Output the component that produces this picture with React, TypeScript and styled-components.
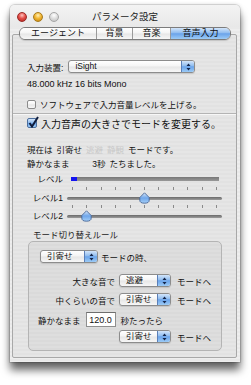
import React from 'react'
import styled, { createGlobalStyle } from 'styled-components'

const aqua = 'linear-gradient(#d3e5fa 0%, #8fbcef 45%, #6aa3ea 52%, #9ccbf6 100%)'
const glass = 'linear-gradient(#ffffff 0%, #f4f4f4 48%, #e6e6e6 52%, #f7f7f7 100%)'

const GlobalStyle = createGlobalStyle`
  html, body {
    margin: 0;
    padding: 0;
    background: #ffffff;
  }
  body {
    font-family: 'Liberation Sans', 'Noto Sans CJK JP', sans-serif;
    color: #111;
  }
`

const Desk = styled.div`
  width: 251px;
  height: 385px;
  box-sizing: border-box;
  padding: 5px 11px 0 10px;
  overflow: hidden;
`

const Window = styled.div`
  width: 230px;
  height: 357px;
  display: flex;
  flex-direction: column;
  border-radius: 5px 5px 0 0;
  background: repeating-linear-gradient(#eeeeee 0 2px, #e9e9e9 2px 4px);
  box-shadow: 0 0 0 1px rgba(0, 0, 0, 0.1), 0 8px 9px rgba(0, 0, 0, 0.6),
    0 0 4px rgba(0, 0, 0, 0.2);
`

const TitleBar = styled.div`
  height: 22px;
  display: grid;
  grid-template-columns: 1fr auto 1fr;
  align-items: center;
  border-radius: 5px 5px 0 0;
  background: linear-gradient(#f3f3f3, #e8e8e8);
`

const Lights = styled.div`
  display: flex;
  gap: 6px;
  padding-left: 7px;
  padding-top: 1px;
`

const Light = styled.span<{ $color: 'red' | 'yellow' | 'gray' }>`
  width: 10px;
  height: 10px;
  border-radius: 50%;
  box-sizing: border-box;
  border: 1px solid
    ${({ $color }) =>
      $color === 'red' ? '#9a2a26' : $color === 'yellow' ? '#a77a1c' : '#a6a6a6'};
  background: ${({ $color }) =>
    $color === 'red'
      ? 'radial-gradient(circle at 50% 30%, #ffc4c0 0, #e5504a 45%, #b0201c 100%)'
      : $color === 'yellow'
      ? 'radial-gradient(circle at 50% 30%, #fff0b8 0, #f2b733 45%, #c0800e 100%)'
      : 'radial-gradient(circle at 50% 30%, #ffffff 0, #dcdcdc 50%, #bdbdbd 100%)'};
`

const Title = styled.div`
  font-size: 9.5px;
  color: #222;
`

const Body = styled.div`
  flex: 1;
  display: flex;
  flex-direction: column;
  padding: 0 3px 4px 2px;
`

const TabBar = styled.div`
  align-self: center;
  position: relative;
  z-index: 1;
  display: flex;
  height: 13px;
  margin-left: 1px;
  margin-bottom: -6px;
  border: 1px solid #7c7c7c;
  border-radius: 6px;
  overflow: hidden;
  box-sizing: border-box;
  box-shadow: 0 1px 1px rgba(0, 0, 0, 0.15);
`

const Tab = styled.div<{ $active?: boolean; $w: number }>`
  width: ${({ $w }) => $w}px;
  display: flex;
  align-items: center;
  justify-content: center;
  font-size: 9px;
  line-height: 11px;
  color: #111;
  background: ${({ $active }) => ($active ? aqua : glass)};
  & + & {
    border-left: 1px solid #9a9a9a;
  }
`

const Panel = styled.div`
  flex: 1;
  border: 1px solid #a8a8a8;
  border-radius: 2px;
  background: repeating-linear-gradient(#e6e6e6 0 2px, #e2e2e2 2px 4px);
  display: flex;
  flex-direction: column;
`

const Section = styled.div`
  display: flex;
  flex-direction: column;
  padding: 0 14px;
`

const Row = styled.div<{ $top?: number; $h?: number; $gap?: number }>`
  display: flex;
  align-items: center;
  margin-top: ${({ $top }) => $top ?? 0}px;
  height: ${({ $h }) => $h ?? 13}px;
  gap: ${({ $gap }) => $gap ?? 0}px;
  font-size: 8.5px;
  white-space: nowrap;
`

const Text = styled.span<{ $dim?: boolean; $size?: number; $w?: number; $right?: boolean }>`
  font-size: ${({ $size }) => $size ?? 8.5}px;
  color: ${({ $dim }) => ($dim ? '#c9c9c9' : '#111')};
  ${({ $w }) => ($w ? `width: ${$w}px; flex: none;` : '')}
  text-align: ${({ $right }) => ($right ? 'right' : 'left')};
`

const PopupBox = styled.div<{ $w: number }>`
  width: ${({ $w }) => $w}px;
  height: 13px;
  flex: none;
  box-sizing: border-box;
  border: 1px solid #8c8c8c;
  border-radius: 3px;
  background: ${glass};
  display: flex;
  align-items: center;
  overflow: hidden;
  box-shadow: 0 1px 1px rgba(0, 0, 0, 0.12);
`

const PopupLabel = styled.span`
  flex: 1;
  padding-left: 6px;
  font-size: 8.5px;
  line-height: 11px;
`

const Stepper = styled.span`
  width: 12px;
  height: 100%;
  display: flex;
  align-items: center;
  justify-content: center;
  border-left: 1px solid #5a7fb8;
  background: ${aqua};
`

const Popup = ({ label, w }: { label: string; w: number }) => (
  <PopupBox $w={w}>
    <PopupLabel>{label}</PopupLabel>
    <Stepper>
      <svg width="5" height="8" viewBox="0 0 5 8">
        <path d="M2.5 0.5 L4.5 3 H0.5 Z M2.5 7.5 L4.5 5 H0.5 Z" fill="#13254a" />
      </svg>
    </Stepper>
  </PopupBox>
)

const Box = styled.span<{ $checked?: boolean; $size: number }>`
  width: ${({ $size }) => $size}px;
  height: ${({ $size }) => $size}px;
  flex: none;
  box-sizing: border-box;
  border: 1px solid ${({ $checked }) => ($checked ? '#4c6f9e' : '#8c8c8c')};
  border-radius: 2px;
  background: ${({ $checked }) => ($checked ? aqua : glass)};
  position: relative;
  & > svg {
    position: absolute;
    left: 0;
    top: -3px;
  }
`

const Check = ({ checked, size }: { checked?: boolean; size: number }) => (
  <Box $checked={checked} $size={size}>
    {checked && (
      <svg width="11" height="12" viewBox="0 0 11 12">
        <path d="M1.5 7 L4 10.5 L10 1" fill="none" stroke="#0e1c3c" strokeWidth="2" />
      </svg>
    )}
  </Box>
)

const Separator = styled.div`
  margin-top: 3px;
  border-top: 1px solid #b4b4b4;
  border-bottom: 1px solid #f7f7f7;
`

const Line = styled.div<{ $top: number }>`
  display: flex;
  align-items: center;
  margin-top: ${({ $top }) => $top}px;
  height: 12px;
  white-space: nowrap;
  gap: 4px;
`

const SliderRow = styled.div<{ $top: number }>`
  display: grid;
  grid-template-columns: 36px 1fr;
  column-gap: 4px;
  align-items: end;
  margin-top: ${({ $top }) => $top}px;
`

const SliderLabel = styled.span`
  font-size: 8.5px;
  line-height: 12px;
  text-align: right;
  white-space: nowrap;
`

const Meter = styled.div`
  height: 4px;
  margin: 0 3px 0 4px;
  background: linear-gradient(#777, #999);
  display: flex;
  align-self: center;
`

const MeterFill = styled.div`
  background: #1414f0;
`

const SliderBody = styled.div`
  display: flex;
  flex-direction: column;
`

const Ticks = styled.div`
  height: 3px;
  display: flex;
  justify-content: space-between;
  padding: 0 5px;
  margin-bottom: 2px;
`

const Tick = styled.span`
  width: 1px;
  background: #8a8a8a;
`

const TrackWrap = styled.div`
  position: relative;
  height: 12px;
  display: flex;
  align-items: center;
`

const Track = styled.div`
  flex: 1;
  height: 3px;
  border-radius: 2px;
  background: linear-gradient(#6a6a6a, #9c9c9c);
`

const Thumb = styled.svg`
  position: absolute;
  top: 0;
  margin-left: -5.5px;
`

const Slider = ({ label, pos, top }: { label: string; pos: number; top: number }) => (
  <SliderRow $top={top}>
    <SliderLabel>{label}</SliderLabel>
    <SliderBody>
      <Ticks>
        {Array.from({ length: 11 }).map((_, i) => (
          <Tick key={i} />
        ))}
      </Ticks>
      <TrackWrap>
        <Track />
        <Thumb
          width="11"
          height="12"
          viewBox="0 0 11 12"
          style={{ left: `calc(5.5px + (100% - 11px) * ${pos / 10})` }}
        >
          <defs>
            <linearGradient id={`th${label}`} x1="0" y1="0" x2="0" y2="1">
              <stop offset="0" stopColor="#d8e8fb" />
              <stop offset="0.5" stopColor="#6fa6ea" />
              <stop offset="1" stopColor="#a6d0f8" />
            </linearGradient>
          </defs>
          <path
            d="M5.5 0.8 L10.2 5.5 V8.2 Q10.2 11.2 5.5 11.2 Q0.8 11.2 0.8 8.2 V5.5 Z"
            fill={`url(#th${label})`}
            stroke="#4a6796"
            strokeWidth="0.9"
          />
        </Thumb>
      </TrackWrap>
    </SliderBody>
  </SliderRow>
)

const GroupLabel = styled.div`
  margin-top: 8px;
  padding-left: 6px;
  font-size: 8.5px;
  line-height: 11px;
  color: #222;
`

const GroupBox = styled.div`
  margin-left: 1px;
  border: 1px solid #b4b4b4;
  border-radius: 5px;
  background: repeating-linear-gradient(#dedede 0 2px, #dadada 2px 4px);
  padding: 8px 0 7px 11px;
  display: flex;
  flex-direction: column;
`

const Field = styled.div`
  width: 30px;
  height: 15px;
  flex: none;
  box-sizing: border-box;
  border: 1px solid #8e8e8e;
  border-top-color: #6e6e6e;
  background: #fff;
  font-size: 9px;
  display: flex;
  align-items: center;
  justify-content: center;
`

export default function App() {
  return (
    <Desk>
      <GlobalStyle />
      <Window>
        <TitleBar>
          <Lights>
            <Light $color="red" />
            <Light $color="yellow" />
            <Light $color="gray" />
          </Lights>
          <Title>パラメータ設定</Title>
          <span />
        </TitleBar>
        <Body>
          <TabBar>
            <Tab $w={76}>エージェント</Tab>
            <Tab $w={35}>背景</Tab>
            <Tab $w={37}>音楽</Tab>
            <Tab $w={59} $active>
              音声入力
            </Tab>
          </TabBar>
          <Panel>
            <Section>
              <Row $top={25} $gap={5}>
                <Text>入力装置:</Text>
                <Popup label="iSight" w={127} />
              </Row>
              <Row $top={5} $h={12}>
                <Text $size={9}>48.000 kHz 16 bits Mono</Text>
              </Row>
              <Row $top={8} $h={12} $gap={4}>
                <Check size={9} />
                <Text>ソフトウェアで入力音量レベルを上げる。</Text>
              </Row>
            </Section>
            <Separator />
            <Section>
              <Row $top={1} $h={14} $gap={4}>
                <Check size={10} checked />
                <Text $size={10}>入力音声の大きさでモードを変更する。</Text>
              </Row>
              <Line $top={13}>
                <Text>現在は</Text>
                <Text>引寄せ</Text>
                <Text $dim>逃避</Text>
                <Text $dim>静観</Text>
                <Text>モードです。</Text>
              </Line>
              <Line $top={2}>
                <Text>静かなまま</Text>
                <Text $w={32} $right>
                  3秒
                </Text>
                <Text>たちました。</Text>
              </Line>
              <SliderRow $top={4}>
                <SliderLabel>レベル</SliderLabel>
                <Meter>
                  <MeterFill style={{ width: '4%' }} />
                </Meter>
              </SliderRow>
              <Slider label="レベル1" pos={5} top={2} />
              <Slider label="レベル2" pos={1} top={1} />
              <GroupLabel>モード切り替えルール</GroupLabel>
              <GroupBox>
                <Row $gap={3}>
                  <Popup label="引寄せ" w={58} />
                  <Text>モードの時、</Text>
                </Row>
                <Row $top={11} $gap={4}>
                  <Text $w={75} $right>
                    大きな音で
                  </Text>
                  <Popup label="逃避" w={52} />
                  <Text style={{ marginLeft: 2 }}>モードへ</Text>
                </Row>
                <Row $top={6} $gap={4}>
                  <Text $w={75} $right>
                    中くらいの音で
                  </Text>
                  <Popup label="引寄せ" w={52} />
                  <Text style={{ marginLeft: 2 }}>モードへ</Text>
                </Row>
                <Row $top={6} $h={15} $gap={5}>
                  <Text style={{ marginLeft: -2 }}>静かなまま</Text>
                  <Field>120.0</Field>
                  <Text>秒たったら</Text>
                </Row>
                <Row $top={3} $gap={4}>
                  <Text $w={75} />
                  <Popup label="引寄せ" w={52} />
                  <Text style={{ marginLeft: 2 }}>モードへ</Text>
                </Row>
              </GroupBox>
            </Section>
          </Panel>
        </Body>
      </Window>
    </Desk>
  )
}
